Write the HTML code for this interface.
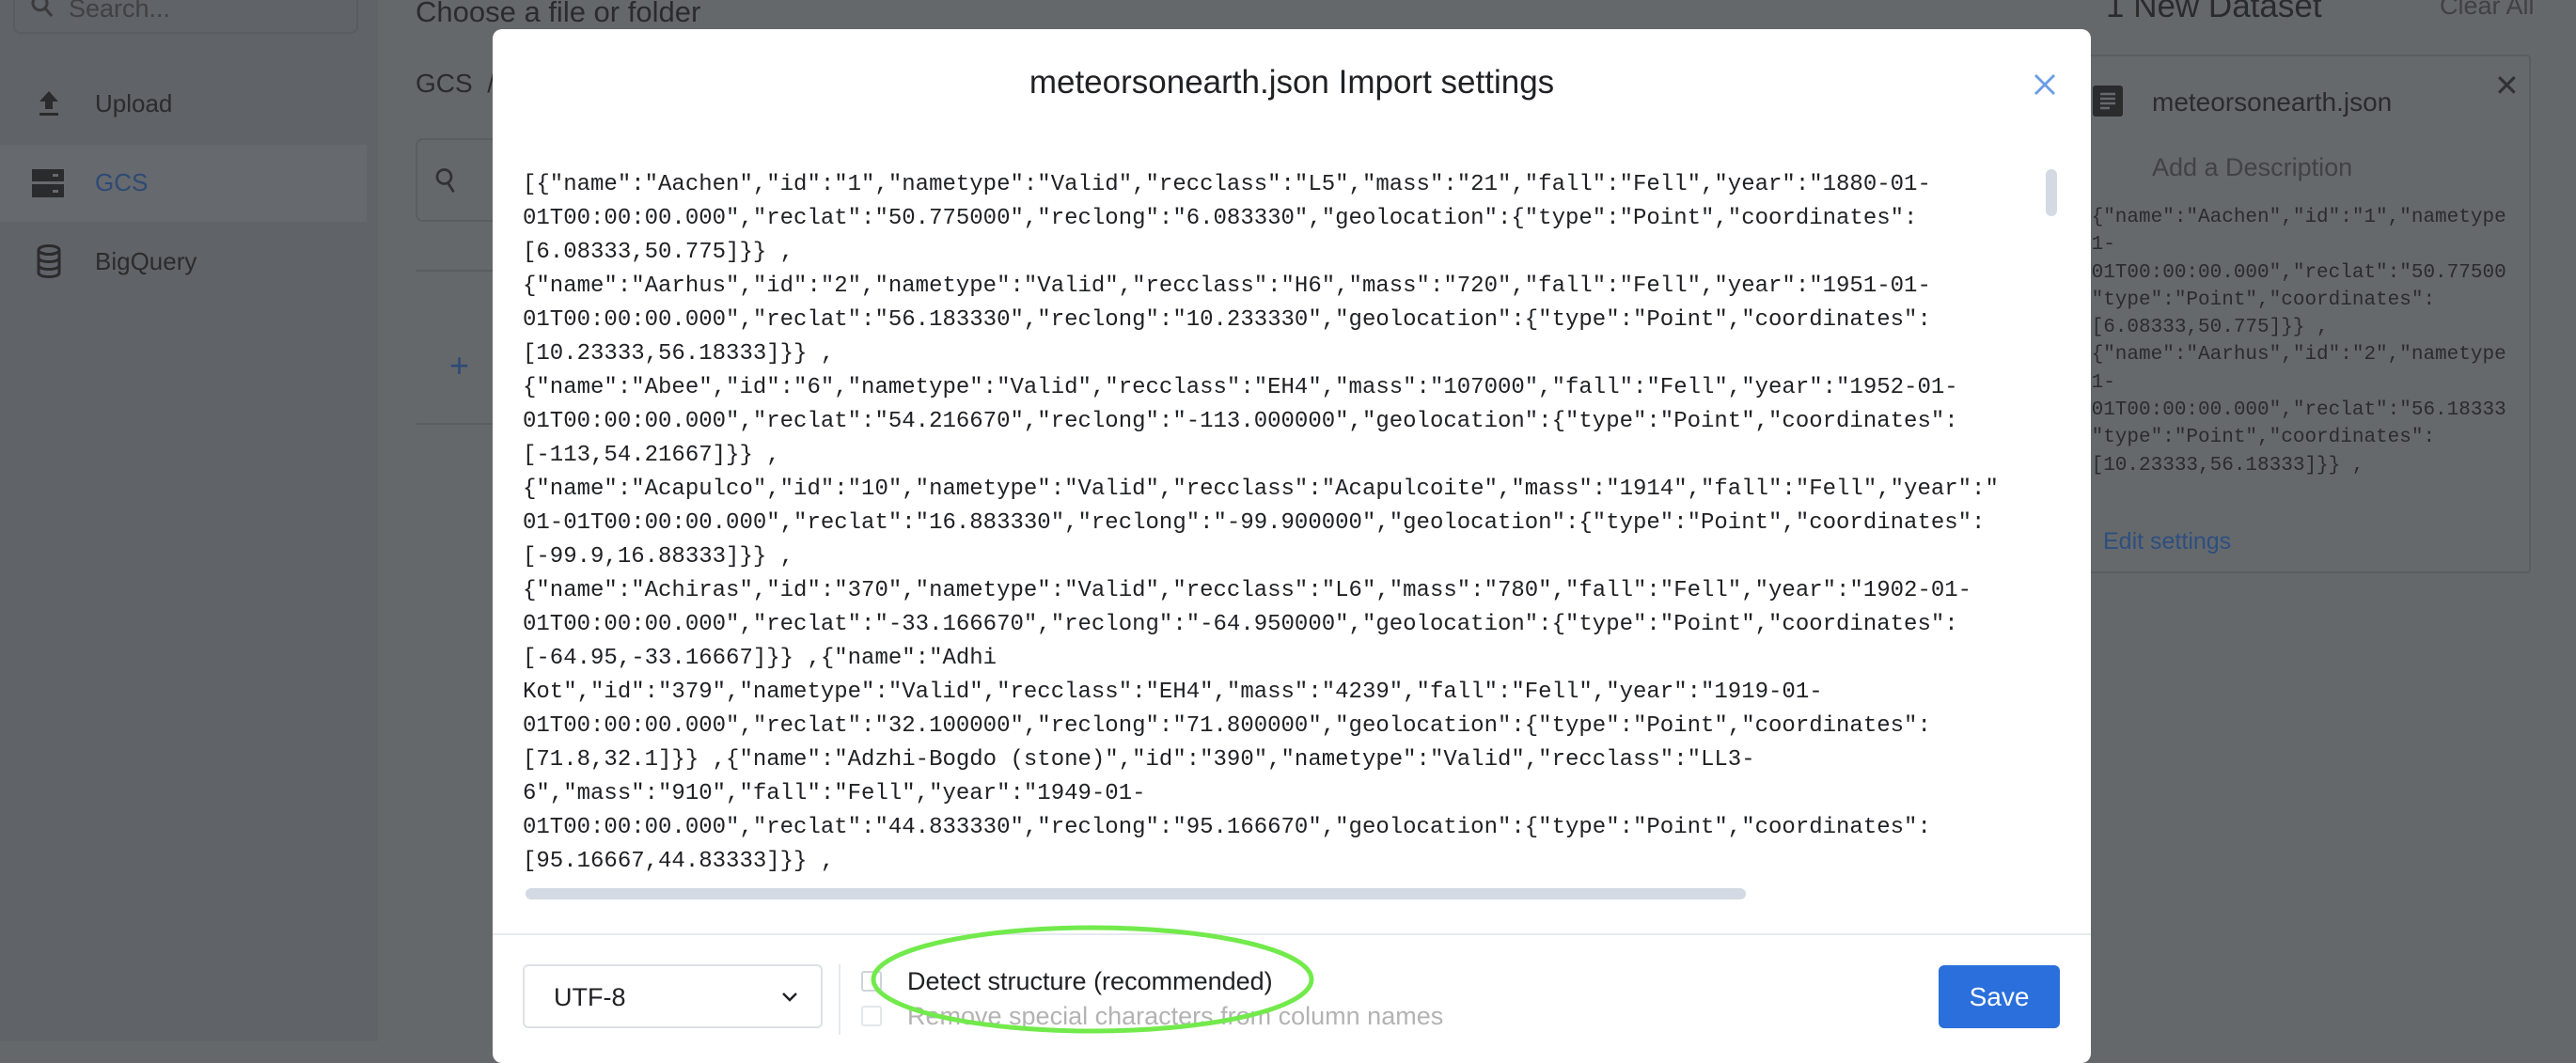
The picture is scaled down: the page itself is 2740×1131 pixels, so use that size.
<!DOCTYPE html>
<html><head><meta charset="utf-8"><style>
*{margin:0;padding:0;box-sizing:border-box}
body{width:2740px;height:1108px;overflow:hidden;background:#65686b;font-family:"Liberation Sans",sans-serif;position:relative;color:#2a2b2d}
.a{position:absolute;white-space:pre}
.side{position:absolute;left:0;top:0;width:402px;height:1108px;background:#606367}
.mono{font-family:"Liberation Mono",monospace}
</style></head><body>
<div class="side"></div>
<div class="a" style="left:14px;top:-20px;width:367px;height:56px;border:2px solid #595c60;border-radius:8px"></div>
<svg class="a" style="left:30px;top:-8px" width="30" height="30" viewBox="0 0 24 24"><circle cx="10" cy="9" r="6" fill="none" stroke="#3a3c3f" stroke-width="2.5"/><path d="M14 13l6 7" stroke="#3a3c3f" stroke-width="2.5"/></svg>
<div class="a" style="left:73px;top:-6px;font-size:27px;color:#3f4144">Search...</div>
<svg class="a" style="left:38px;top:95px" width="28" height="30" viewBox="0 0 28 30"><path d="M14 2L4 13h6v8h8v-8h6z" fill="#2a2b2d"/><rect x="4" y="25" width="20" height="3" fill="#2a2b2d"/></svg>
<div class="a" style="left:101px;top:95px;font-size:26px">Upload</div>
<div class="a" style="left:0;top:154px;width:390px;height:82px;background:#66696d"></div>
<svg class="a" style="left:34px;top:180px" width="34" height="30" viewBox="0 0 34 30"><rect x="0" y="0" width="34" height="13" fill="#2a2b2d"/><rect x="0" y="16" width="34" height="14" fill="#2a2b2d"/><rect x="22" y="5" width="6" height="3" fill="#66696d"/><rect x="22" y="22" width="6" height="3" fill="#66696d"/></svg>
<div class="a" style="left:101px;top:179px;font-size:26px;color:#2e4a75">GCS</div>
<svg class="a" style="left:38px;top:260px" width="28" height="36" viewBox="0 0 28 36"><g fill="none" stroke="#2a2b2d" stroke-width="3"><ellipse cx="14" cy="6" rx="11" ry="4.5"/><path d="M3 6v24c0 3 5 4.5 11 4.5s11-1.5 11-4.5V6M3 14c0 3 5 4.5 11 4.5s11-1.5 11-4.5M3 22c0 3 5 4.5 11 4.5s11-1.5 11-4.5"/></g></svg>
<div class="a" style="left:101px;top:263px;font-size:26px">BigQuery</div>
<div class="a" style="left:442px;top:-5px;font-size:31px">Choose a file or folder</div>
<div class="a" style="left:442px;top:73px;font-size:28px">GCS  /</div>
<div class="a" style="left:442px;top:147px;width:120px;height:89px;border:2px solid #5a5d61;border-radius:8px"></div>
<svg class="a" style="left:460px;top:176px" width="30" height="34" viewBox="0 0 24 26"><circle cx="10" cy="9" r="6" fill="none" stroke="#2f3133" stroke-width="2.2"/><path d="M13 14l5 8" stroke="#2f3133" stroke-width="2.2"/></svg>
<div class="a" style="left:442px;top:287px;width:100px;height:2px;background:#5a5d61"></div>
<div class="a" style="left:442px;top:450px;width:100px;height:2px;background:#5a5d61"></div>
<div class="a" style="left:478px;top:368px;font-size:36px;color:#2e4a75">+</div>
<div class="a" style="left:2240px;top:-13px;font-size:35px">1 New Dataset</div>
<div class="a" style="left:2595px;top:-9px;font-size:27px;color:#3f4144">Clear All</div>
<div class="a" style="left:2200px;top:58px;width:492px;height:552px;border:2px solid #5a5d61;border-radius:4px;background:#66696c"></div>
<svg class="a" style="left:2226px;top:91px" width="32" height="33" viewBox="0 0 32 33"><rect width="32" height="33" rx="3" fill="#2a2b2d"/><path d="M8 9h16M8 14h16M8 19h16M8 24h10" stroke="#66696c" stroke-width="2.5"/></svg>
<div class="a" style="left:2289px;top:93px;font-size:28px">meteorsonearth.json</div>
<div class="a" style="left:2653px;top:72px;font-size:32px;color:#2f3133">✕</div>
<div class="a" style="left:2289px;top:163px;font-size:27px;color:#404246">Add a Description</div>
<div class="a mono" style="left:2212px;top:217px;font-size:21px;line-height:29.3px;color:#2a2b2d">[{"name":"Aachen","id":"1","nametype
 1-
 01T00:00:00.000","reclat":"50.77500
 "type":"Point","coordinates":
 [6.08333,50.775]}} ,
 {"name":"Aarhus","id":"2","nametype
 1-
 01T00:00:00.000","reclat":"56.18333
 "type":"Point","coordinates":
 [10.23333,56.18333]}} ,</div>
<div class="a" style="left:2237px;top:562px;font-size:25px;color:#2c4f80">Edit settings</div>

<div class="a" style="left:524px;top:31px;width:1700px;height:1100px;background:#fff;border-radius:10px;overflow:hidden">
<div class="a" style="left:0;top:37px;width:1700px;text-align:center;font-size:35px;color:#202124">meteorsonearth.json Import settings</div>
<svg class="a" style="left:1638px;top:46px" width="26" height="26" viewBox="0 0 26 26"><path d="M3 3l20 20M23 3L3 23" stroke="#6a9be6" stroke-width="2.8"/></svg>
<div class="a mono" style="left:32px;top:148px;width:1567px;height:780px;overflow:hidden;font-size:24px;line-height:36px;color:#202124">[{"name":"Aachen","id":"1","nametype":"Valid","recclass":"L5","mass":"21","fall":"Fell","year":"1880-01-
01T00:00:00.000","reclat":"50.775000","reclong":"6.083330","geolocation":{"type":"Point","coordinates":
[6.08333,50.775]}} ,
{"name":"Aarhus","id":"2","nametype":"Valid","recclass":"H6","mass":"720","fall":"Fell","year":"1951-01-
01T00:00:00.000","reclat":"56.183330","reclong":"10.233330","geolocation":{"type":"Point","coordinates":
[10.23333,56.18333]}} ,
{"name":"Abee","id":"6","nametype":"Valid","recclass":"EH4","mass":"107000","fall":"Fell","year":"1952-01-
01T00:00:00.000","reclat":"54.216670","reclong":"-113.000000","geolocation":{"type":"Point","coordinates":
[-113,54.21667]}} ,
{"name":"Acapulco","id":"10","nametype":"Valid","recclass":"Acapulcoite","mass":"1914","fall":"Fell","year":"1970-
01-01T00:00:00.000","reclat":"16.883330","reclong":"-99.900000","geolocation":{"type":"Point","coordinates":
[-99.9,16.88333]}} ,
{"name":"Achiras","id":"370","nametype":"Valid","recclass":"L6","mass":"780","fall":"Fell","year":"1902-01-
01T00:00:00.000","reclat":"-33.166670","reclong":"-64.950000","geolocation":{"type":"Point","coordinates":
[-64.95,-33.16667]}} ,{"name":"Adhi
Kot","id":"379","nametype":"Valid","recclass":"EH4","mass":"4239","fall":"Fell","year":"1919-01-
01T00:00:00.000","reclat":"32.100000","reclong":"71.800000","geolocation":{"type":"Point","coordinates":
[71.8,32.1]}} ,{"name":"Adzhi-Bogdo (stone)","id":"390","nametype":"Valid","recclass":"LL3-
6","mass":"910","fall":"Fell","year":"1949-01-
01T00:00:00.000","reclat":"44.833330","reclong":"95.166670","geolocation":{"type":"Point","coordinates":
[95.16667,44.83333]}} ,</div>
<div class="a" style="left:1652px;top:149px;width:12px;height:50px;border-radius:6px;background:#d3dae3"></div>
<div class="a" style="left:35px;top:914px;width:1298px;height:12px;border-radius:6px;background:#d3dae3"></div>
<div class="a" style="left:0;top:962px;width:1700px;height:2px;background:#e6eaef"></div>
<div class="a" style="left:32px;top:995px;width:319px;height:68px;border:2px solid #dde1e6;border-radius:6px"></div>
<div class="a" style="left:65px;top:1015px;font-size:27px;color:#202124">UTF-8</div>
<svg class="a" style="left:307px;top:1024px" width="18" height="12" viewBox="0 0 18 12"><path d="M2 2l7 7 7-7" fill="none" stroke="#202124" stroke-width="2.5"/></svg>
<div class="a" style="left:368px;top:995px;width:2px;height:75px;background:#e6eaef"></div>
<div class="a" style="left:392px;top:1002px;width:22px;height:22px;border:2px solid #cfd4da;border-radius:3px"></div>
<div class="a" style="left:441px;top:998px;font-size:27px;color:#202124">Detect structure (recommended)</div>
<div class="a" style="left:392px;top:1039px;width:22px;height:22px;border:2px solid #e3e6ea;border-radius:3px"></div>
<div class="a" style="left:441px;top:1035px;font-size:27px;color:#b3b3b3">Remove special characters from column names</div>
<div class="a" style="left:1538px;top:996px;width:129px;height:67px;border-radius:6px;background:#2a6fdb"></div>
<div class="a" style="left:1538px;top:1014px;width:129px;text-align:center;font-size:28px;color:#fff">Save</div>
</div>
<svg class="a" style="left:920px;top:976px" width="490" height="130"><ellipse cx="242" cy="66" rx="233" ry="55" fill="none" stroke="#72ea4c" stroke-width="5"/></svg>
</body></html>
